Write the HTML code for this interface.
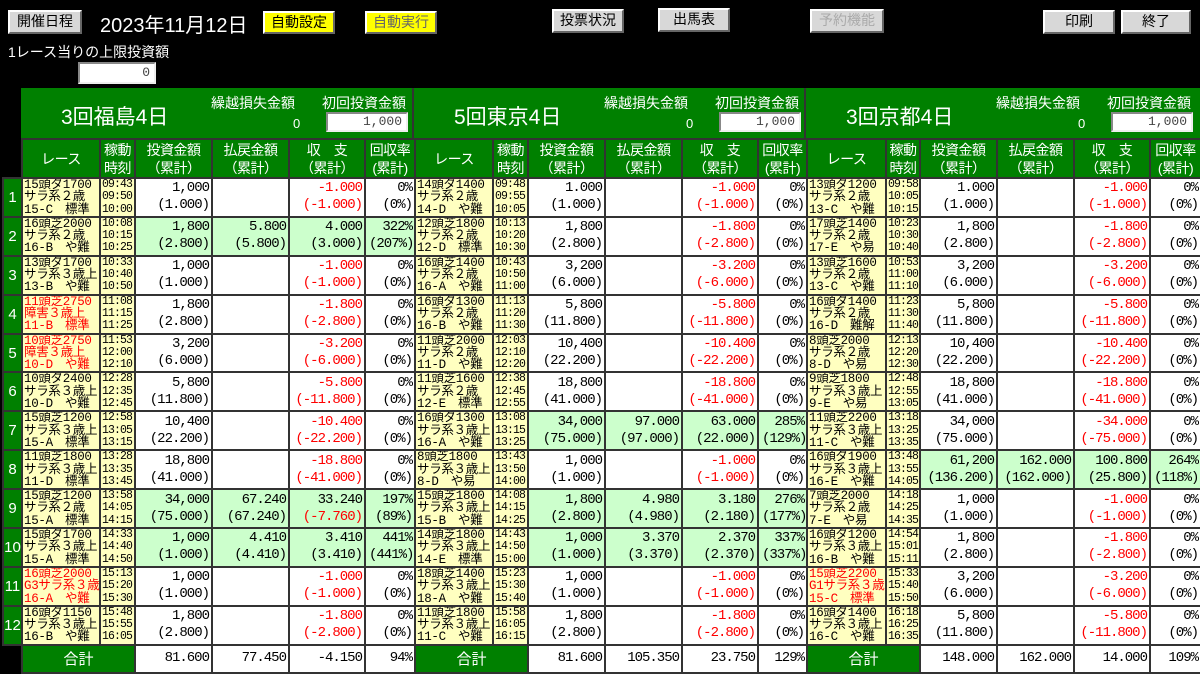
<!DOCTYPE html>
<html><head><meta charset="utf-8">
<style>
*{box-sizing:border-box}
body{margin:0;background:#000;width:1200px;height:672px;overflow:hidden;position:relative;font-family:"Liberation Sans","Noto Sans CJK JP",sans-serif;color:#000}
.btn{position:absolute;background:#d8d8d8;border:2px solid;border-color:#fff #666 #666 #fff;font-size:14px;text-align:center;line-height:19px;height:24px}
.yb{position:absolute;background:#ffff00;border:2px solid;border-color:#fff #666 #666 #fff;font-size:14px;text-align:center;line-height:19px;height:23px}
.wt{position:absolute;color:#fff}
.inp{position:absolute;background:#fff;border:2px solid;border-color:#888 #eee #eee #888;text-align:right;font-size:13px;color:#444;padding-right:4px;line-height:16px;font-family:"Liberation Mono","Noto Sans CJK JP",monospace}
.vh{position:absolute;top:88px;height:50px;background:#008000;border-right:2px solid #333}
.vh .t{position:absolute;left:40px;top:13px;font-size:21px;color:#fff}
.vh .l1{position:absolute;left:190px;top:5px;font-size:14px;color:#fff}
.vh .l2{position:absolute;left:301px;top:5px;font-size:14px;color:#fff}
.vh .z{position:absolute;left:272px;top:28px;font-size:13px;color:#fff}
.vh .inp{left:305px;top:24px;width:82px;height:20px}
table{position:absolute;left:2px;top:138px;border-collapse:collapse;table-layout:fixed;width:1198px}
td,th{border:2px solid #333;padding:0 3px;overflow:hidden;white-space:nowrap}
th{background:#008000;color:#fff;font-weight:normal;font-size:14px;line-height:18px;height:39px;text-align:center;padding:0;letter-spacing:-0.5px}
th.e,td.e{background:#000;border:none}
tr.b td{height:38.8px}
td.k{background:#008000;color:#fff;text-align:center;font-size:15px;padding:0}
td.r{background:#ffffc0;font-size:12.5px;line-height:12.3px;padding:0 1px;font-family:"Liberation Mono","Noto Sans CJK JP",monospace;letter-spacing:-0.3px}
td.t{background:#ffffc0;font-size:11.5px;line-height:12.3px;padding:0 0 0 1px;font-family:"Liberation Mono",monospace;letter-spacing:-0.9px}
td.n{background:#fff;text-align:right;font-size:14px;line-height:17px;font-family:"Liberation Mono","Noto Sans CJK JP",monospace;letter-spacing:-1px;padding-right:2px}
td.g{background:#ccffcc}
.red{color:#ff0000}
tr.tot td{height:28px}
td.s{background:#008000;color:#fff;text-align:center;font-size:15px}
</style></head><body>
<div class="btn" style="left:8px;top:10px;width:74px">開催日程</div>
<div class="wt" style="left:100px;top:9px;font-size:20px">2023年11月12日</div>
<div class="yb" style="left:263px;top:11px;width:72px">自動設定</div>
<div class="yb" style="left:365px;top:11px;width:72px;color:#666">自動実行</div>
<div class="btn" style="left:552px;top:9px;width:72px">投票状況</div>
<div class="btn" style="left:658px;top:8px;width:72px">出馬表</div>
<div class="btn" style="left:810px;top:9px;width:74px;color:#aaa">予約機能</div>
<div class="btn" style="left:1043px;top:10px;width:72px">印刷</div>
<div class="btn" style="left:1121px;top:10px;width:70px">終了</div>
<div class="wt" style="left:8px;top:42px;font-size:14px">1レース当りの上限投資額</div>
<div class="inp" style="left:78px;top:62px;width:78px;height:22px;line-height:18px">0</div>

<div class="vh" style="left:21px;width:393px"><div class="t">3回福島4日</div><div class="l1">繰越損失金額</div><div class="z">0</div><div class="l2">初回投資金額</div><div class="inp">1,000</div></div>
<div class="vh" style="left:414px;width:392px"><div class="t">5回東京4日</div><div class="l1">繰越損失金額</div><div class="z">0</div><div class="l2">初回投資金額</div><div class="inp">1,000</div></div>
<div class="vh" style="left:806px;width:394px;border-right:none"><div class="t">3回京都4日</div><div class="l1">繰越損失金額</div><div class="z">0</div><div class="l2">初回投資金額</div><div class="inp">1,000</div></div>

<table>
<colgroup><col style="width:19px"><col style="width:78px"><col style="width:35px"><col style="width:77px"><col style="width:77px"><col style="width:76px"><col style="width:50px"><col style="width:78px"><col style="width:35px"><col style="width:77px"><col style="width:77px"><col style="width:76px"><col style="width:49px"><col style="width:79px"><col style="width:34px"><col style="width:77px"><col style="width:77px"><col style="width:76px"><col style="width:51px"></colgroup>
<tr><th class="e"></th>
<th>レース</th><th>稼動<br>時刻</th><th>投資金額<br>（累計）</th><th>払戻金額<br>（累計）</th><th>収　支<br>（累計）</th><th>回収率<br>(累計)</th>
<th>レース</th><th>稼動<br>時刻</th><th>投資金額<br>（累計）</th><th>払戻金額<br>（累計）</th><th>収　支<br>（累計）</th><th>回収率<br>(累計)</th>
<th>レース</th><th>稼動<br>時刻</th><th>投資金額<br>（累計）</th><th>払戻金額<br>（累計）</th><th>収　支<br>（累計）</th><th>回収率<br>(累計)</th></tr>

<tr class="b"><td class="k">1</td>
<td class="r">15頭ダ1700<br>サラ系２歳<br>15-C　標準</td><td class="t">09:43<br>09:50<br>10:00</td><td class="n">1,000<br>(1.000)</td><td class="n"></td><td class="n red">-1.000<br>(-1.000)</td><td class="n">0%<br>(0%)</td>
<td class="r">14頭ダ1400<br>サラ系２歳<br>14-D　や難</td><td class="t">09:48<br>09:55<br>10:05</td><td class="n">1.000<br>(1.000)</td><td class="n"></td><td class="n red">-1.000<br>(-1.000)</td><td class="n">0%<br>(0%)</td>
<td class="r">13頭ダ1200<br>サラ系２歳<br>13-C　や難</td><td class="t">09:58<br>10:05<br>10:15</td><td class="n">1.000<br>(1.000)</td><td class="n"></td><td class="n red">-1.000<br>(-1.000)</td><td class="n">0%<br>(0%)</td></tr>

<tr class="b"><td class="k">2</td>
<td class="r">16頭芝2000<br>サラ系２歳<br>16-B　や難</td><td class="t">10:08<br>10:15<br>10:25</td><td class="n g">1,800<br>(2.800)</td><td class="n g">5.800<br>(5.800)</td><td class="n g">4.000<br>(3.000)</td><td class="n g">322%<br>(207%)</td>
<td class="r">12頭芝1800<br>サラ系２歳<br>12-D　標準</td><td class="t">10:13<br>10:20<br>10:30</td><td class="n">1,800<br>(2.800)</td><td class="n"></td><td class="n red">-1.800<br>(-2.800)</td><td class="n">0%<br>(0%)</td>
<td class="r">17頭芝1400<br>サラ系２歳<br>17-E　や易</td><td class="t">10:23<br>10:30<br>10:40</td><td class="n">1,800<br>(2.800)</td><td class="n"></td><td class="n red">-1.800<br>(-2.800)</td><td class="n">0%<br>(0%)</td></tr>

<tr class="b"><td class="k">3</td>
<td class="r">13頭ダ1700<br>サラ系３歳上<br>13-B　や難</td><td class="t">10:33<br>10:40<br>10:50</td><td class="n">1,000<br>(1.000)</td><td class="n"></td><td class="n red">-1.000<br>(-1.000)</td><td class="n">0%<br>(0%)</td>
<td class="r">16頭芝1400<br>サラ系２歳<br>16-A　や難</td><td class="t">10:43<br>10:50<br>11:00</td><td class="n">3,200<br>(6.000)</td><td class="n"></td><td class="n red">-3.200<br>(-6.000)</td><td class="n">0%<br>(0%)</td>
<td class="r">13頭芝1600<br>サラ系２歳<br>13-C　や難</td><td class="t">10:53<br>11:00<br>11:10</td><td class="n">3,200<br>(6.000)</td><td class="n"></td><td class="n red">-3.200<br>(-6.000)</td><td class="n">0%<br>(0%)</td></tr>

<tr class="b"><td class="k">4</td>
<td class="r red">11頭芝2750<br>障害３歳上<br>11-B　標準</td><td class="t">11:08<br>11:15<br>11:25</td><td class="n">1,800<br>(2.800)</td><td class="n"></td><td class="n red">-1.800<br>(-2.800)</td><td class="n">0%<br>(0%)</td>
<td class="r">16頭ダ1300<br>サラ系２歳<br>16-B　や難</td><td class="t">11:13<br>11:20<br>11:30</td><td class="n">5,800<br>(11.800)</td><td class="n"></td><td class="n red">-5.800<br>(-11.800)</td><td class="n">0%<br>(0%)</td>
<td class="r">16頭ダ1400<br>サラ系２歳<br>16-D　難解</td><td class="t">11:23<br>11:30<br>11:40</td><td class="n">5,800<br>(11.800)</td><td class="n"></td><td class="n red">-5.800<br>(-11.800)</td><td class="n">0%<br>(0%)</td></tr>

<tr class="b"><td class="k">5</td>
<td class="r red">10頭芝2750<br>障害３歳上<br>10-D　や難</td><td class="t">11:53<br>12:00<br>12:10</td><td class="n">3,200<br>(6.000)</td><td class="n"></td><td class="n red">-3.200<br>(-6.000)</td><td class="n">0%<br>(0%)</td>
<td class="r">11頭芝2000<br>サラ系２歳<br>11-D　や難</td><td class="t">12:03<br>12:10<br>12:20</td><td class="n">10,400<br>(22.200)</td><td class="n"></td><td class="n red">-10.400<br>(-22.200)</td><td class="n">0%<br>(0%)</td>
<td class="r">8頭芝2000<br>サラ系２歳<br>8-D　や易</td><td class="t">12:13<br>12:20<br>12:30</td><td class="n">10,400<br>(22.200)</td><td class="n"></td><td class="n red">-10.400<br>(-22.200)</td><td class="n">0%<br>(0%)</td></tr>

<tr class="b"><td class="k">6</td>
<td class="r">10頭ダ2400<br>サラ系３歳上<br>10-D　や難</td><td class="t">12:28<br>12:35<br>12:45</td><td class="n">5,800<br>(11.800)</td><td class="n"></td><td class="n red">-5.800<br>(-11.800)</td><td class="n">0%<br>(0%)</td>
<td class="r">11頭芝1600<br>サラ系２歳<br>12-E　標準</td><td class="t">12:38<br>12:45<br>12:55</td><td class="n">18,800<br>(41.000)</td><td class="n"></td><td class="n red">-18.800<br>(-41.000)</td><td class="n">0%<br>(0%)</td>
<td class="r">9頭芝1800<br>サラ系３歳上<br>9-E　や易</td><td class="t">12:48<br>12:55<br>13:05</td><td class="n">18,800<br>(41.000)</td><td class="n"></td><td class="n red">-18.800<br>(-41.000)</td><td class="n">0%<br>(0%)</td></tr>

<tr class="b"><td class="k">7</td>
<td class="r">15頭芝1200<br>サラ系３歳上<br>15-A　標準</td><td class="t">12:58<br>13:05<br>13:15</td><td class="n">10,400<br>(22.200)</td><td class="n"></td><td class="n red">-10.400<br>(-22.200)</td><td class="n">0%<br>(0%)</td>
<td class="r">16頭ダ1300<br>サラ系３歳上<br>16-A　や難</td><td class="t">13:08<br>13:15<br>13:25</td><td class="n g">34,000<br>(75.000)</td><td class="n g">97.000<br>(97.000)</td><td class="n g">63.000<br>(22.000)</td><td class="n g">285%<br>(129%)</td>
<td class="r">11頭芝2200<br>サラ系３歳上<br>11-C　や難</td><td class="t">13:18<br>13:25<br>13:35</td><td class="n">34,000<br>(75.000)</td><td class="n"></td><td class="n red">-34.000<br>(-75.000)</td><td class="n">0%<br>(0%)</td></tr>

<tr class="b"><td class="k">8</td>
<td class="r">11頭芝1800<br>サラ系３歳上<br>11-D　標準</td><td class="t">13:28<br>13:35<br>13:45</td><td class="n">18,800<br>(41.000)</td><td class="n"></td><td class="n red">-18.800<br>(-41.000)</td><td class="n">0%<br>(0%)</td>
<td class="r">8頭芝1800<br>サラ系３歳上<br>8-D　や易</td><td class="t">13:43<br>13:50<br>14:00</td><td class="n">1,000<br>(1.000)</td><td class="n"></td><td class="n red">-1.000<br>(-1.000)</td><td class="n">0%<br>(0%)</td>
<td class="r">16頭ダ1900<br>サラ系３歳上<br>16-E　や難</td><td class="t">13:48<br>13:55<br>14:05</td><td class="n g">61,200<br>(136.200)</td><td class="n g">162.000<br>(162.000)</td><td class="n g">100.800<br>(25.800)</td><td class="n g">264%<br>(118%)</td></tr>

<tr class="b"><td class="k">9</td>
<td class="r">15頭芝1200<br>サラ系２歳<br>15-A　標準</td><td class="t">13:58<br>14:05<br>14:15</td><td class="n g">34,000<br>(75.000)</td><td class="n g">67.240<br>(67.240)</td><td class="n g">33.240<br><span class="red">(-7.760)</span></td><td class="n g">197%<br>(89%)</td>
<td class="r">15頭芝1800<br>サラ系３歳上<br>15-B　や難</td><td class="t">14:08<br>14:15<br>14:25</td><td class="n g">1,800<br>(2.800)</td><td class="n g">4.980<br>(4.980)</td><td class="n g">3.180<br>(2.180)</td><td class="n g">276%<br>(177%)</td>
<td class="r">7頭芝2000<br>サラ系２歳<br>7-E　や易</td><td class="t">14:18<br>14:25<br>14:35</td><td class="n">1,000<br>(1.000)</td><td class="n"></td><td class="n red">-1.000<br>(-1.000)</td><td class="n">0%<br>(0%)</td></tr>

<tr class="b"><td class="k">10</td>
<td class="r">15頭ダ1700<br>サラ系３歳上<br>15-A　標準</td><td class="t">14:33<br>14:40<br>14:50</td><td class="n g">1,000<br>(1.000)</td><td class="n g">4.410<br>(4.410)</td><td class="n g">3.410<br>(3.410)</td><td class="n g">441%<br>(441%)</td>
<td class="r">14頭芝1800<br>サラ系３歳上<br>14-E　標準</td><td class="t">14:43<br>14:50<br>15:00</td><td class="n g">1,000<br>(1.000)</td><td class="n g">3.370<br>(3.370)</td><td class="n g">2.370<br>(2.370)</td><td class="n g">337%<br>(337%)</td>
<td class="r">16頭ダ1200<br>サラ系３歳上<br>16-B　や難</td><td class="t">14:54<br>15:01<br>15:11</td><td class="n">1,800<br>(2.800)</td><td class="n"></td><td class="n red">-1.800<br>(-2.800)</td><td class="n">0%<br>(0%)</td></tr>

<tr class="b"><td class="k">11</td>
<td class="r red">16頭芝2000<br>G3サラ系３歳<br>16-A　や難</td><td class="t">15:13<br>15:20<br>15:30</td><td class="n">1,000<br>(1.000)</td><td class="n"></td><td class="n red">-1.000<br>(-1.000)</td><td class="n">0%<br>(0%)</td>
<td class="r">18頭芝1400<br>サラ系３歳上<br>18-A　や難</td><td class="t">15:23<br>15:30<br>15:40</td><td class="n">1,000<br>(1.000)</td><td class="n"></td><td class="n red">-1.000<br>(-1.000)</td><td class="n">0%<br>(0%)</td>
<td class="r red">15頭芝2200<br>G1サラ系３歳<br>15-C　標準</td><td class="t">15:33<br>15:40<br>15:50</td><td class="n">3,200<br>(6.000)</td><td class="n"></td><td class="n red">-3.200<br>(-6.000)</td><td class="n">0%<br>(0%)</td></tr>

<tr class="b"><td class="k">12</td>
<td class="r">16頭ダ1150<br>サラ系３歳上<br>16-B　や難</td><td class="t">15:48<br>15:55<br>16:05</td><td class="n">1,800<br>(2.800)</td><td class="n"></td><td class="n red">-1.800<br>(-2.800)</td><td class="n">0%<br>(0%)</td>
<td class="r">11頭芝1800<br>サラ系３歳上<br>11-C　や難</td><td class="t">15:58<br>16:05<br>16:15</td><td class="n">1,800<br>(2.800)</td><td class="n"></td><td class="n red">-1.800<br>(-2.800)</td><td class="n">0%<br>(0%)</td>
<td class="r">16頭ダ1400<br>サラ系３歳上<br>16-C　や難</td><td class="t">16:18<br>16:25<br>16:35</td><td class="n">5,800<br>(11.800)</td><td class="n"></td><td class="n red">-5.800<br>(-11.800)</td><td class="n">0%<br>(0%)</td></tr>

<tr class="tot"><td class="e"></td>
<td class="s" colspan="2">合計</td><td class="n">81.600</td><td class="n">77.450</td><td class="n">-4.150</td><td class="n">94%</td>
<td class="s" colspan="2">合計</td><td class="n">81.600</td><td class="n">105.350</td><td class="n">23.750</td><td class="n">129%</td>
<td class="s" colspan="2">合計</td><td class="n">148.000</td><td class="n">162.000</td><td class="n">14.000</td><td class="n">109%</td></tr>
</table>
</body></html>
